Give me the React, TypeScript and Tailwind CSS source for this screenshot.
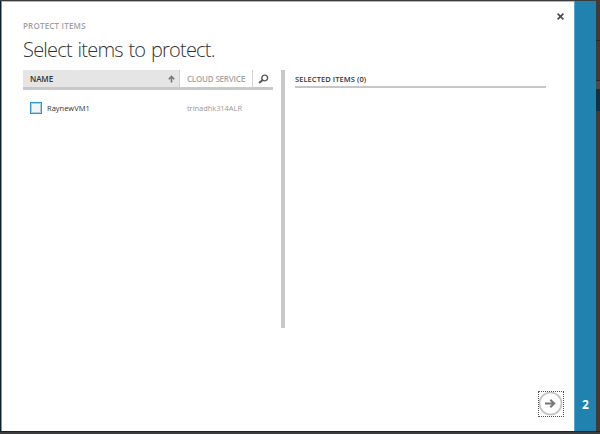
import React from "react";

type Item = { name: string; service: string };

const items: Item[] = [{ name: "RaynewVM1", service: "trinadhk314ALR" }];

function CloseIcon() {
  return (
    <svg className="h-[7px] w-[7px]" viewBox="0 0 7 7" fill="none" stroke="#4c4c4c" strokeWidth="1.7">
      <path d="M0.6 0.7 6.4 6.3M6.4 0.7 0.6 6.3" />
    </svg>
  );
}

function SortIcon() {
  return (
    <svg className="h-[8px] w-[7px]" viewBox="0 0 7 8" fill="none" stroke="#777" strokeWidth="1.6">
      <path d="M3.5 7.5V1.2M0.8 4.2 3.5 1.4 6.2 4.2" />
    </svg>
  );
}

function SearchIcon() {
  return (
    <svg className="h-[10px] w-[11px]" viewBox="0 0 11 10" fill="none" stroke="#555a60">
      <circle cx="6.7" cy="4" r="2.9" strokeWidth="1.4" />
      <path d="M4.4 6.2 1 9" strokeWidth="2" />
    </svg>
  );
}

function NextIcon() {
  return (
    <svg className="h-[24px] w-[24px]" viewBox="0 0 24 24" fill="none">
      <circle cx="11.5" cy="11.5" r="11" stroke="#c3c3c3" strokeWidth="1.7" />
      <path d="M6 11.5H15M11.3 7.7 15.2 11.5 11.3 15.3" stroke="#777" strokeWidth="2" />
    </svg>
  );
}

function ItemTable() {
  return (
    <section className="w-[250px]">
      <div className="flex h-[20px] border-b-[3px] border-[#c9c9c9] text-[8px] leading-[18px]">
        <div className="flex w-[157px] items-center justify-between border-r border-[#d0d0d0] bg-[#e5e5e5] pr-[4px] pl-[7px] font-semibold text-[#333]">
          <span className="tracking-[-0.1px]">NAME</span>
          <SortIcon />
        </div>
        <div className="w-[73px] border-r border-[#d0d0d0] pl-[7px] font-semibold tracking-[-0.2px] whitespace-nowrap text-[#a5a5a5]">
          CLOUD SERVICE
        </div>
        <div className="flex items-center pl-[5px]">
          <SearchIcon />
        </div>
      </div>
      {items.map((item) => (
        <div key={item.name} className="mt-[12px] flex h-[12px] items-center pl-[7px] text-[7.5px] leading-[12px]">
          <span className="h-[12px] w-[12px] border border-[#3498ca] bg-[#f4f4f4] shadow-[inset_0_0_0_1px_#a5d0e6]" />
          <span className="w-[139px] pl-[5px] text-[#333]">{item.name}</span>
          <span className="pl-[6px] tracking-[-0.05px] text-[#999]">{item.service}</span>
        </div>
      ))}
    </section>
  );
}

export default function App() {
  return (
    <div className="flex h-[434px] w-[600px] flex-col overflow-hidden bg-[#3c3b3d] pt-px font-['Open_Sans','Noto_Sans',sans-serif]">
      <div className="flex h-[430px]">
        <div className="w-[2px] border-r border-[#8b929a] bg-[#0a1f33]" />
        <main className="flex w-[572px] flex-col border-t border-[#b5b5b5] bg-white pr-[10px] pl-[21px]">
          <div className="flex h-[32px] justify-between">
            <h2 className="pt-[18px] text-[8px] leading-[12px] font-semibold tracking-[0.2px] text-[#a0a0a0]">PROTECT ITEMS</h2>
            <div className="pt-[11px]">
              <CloseIcon />
            </div>
          </div>
          <h1 className="h-[36px] text-[20px] leading-[31px] font-light tracking-[-0.78px] text-[#333] [word-spacing:1.2px]">
            Select items to protect.
          </h1>
          <div className="flex h-[258px]">
            <ItemTable />
            <div className="ml-[8px] w-[4px] bg-[#c8c8c8]" />
            <section className="ml-[10px] w-[251px]">
              <h3 className="h-[18px] border-b-2 border-[#c6c6c6] text-[7.5px] leading-[19px] font-semibold tracking-[0.07px] text-[#333]">
                SELECTED ITEMS (0)
              </h3>
            </section>
          </div>
          <div className="mt-[63px] flex justify-end">
            <button className="h-[26px] w-[26px] border border-dotted border-[#555]">
              <NextIcon />
            </button>
          </div>
        </main>
        <aside className="flex w-[22px] items-end justify-center border-l border-[#5ba5c6] bg-[#2083af] pb-[18px] text-[12px] leading-[16px] font-bold text-white">
          2
        </aside>
        <div className="flex w-[4px] flex-col">
          <div className="h-[40px] border-b border-[#29292b]" />
          <div className="h-[40px] border-b border-[#29292b]" />
          <div className="h-[8px] bg-[#4a4a4a]" />
          <div className="h-[22px] bg-[#12303f]" />
        </div>
      </div>
      <div className="h-px bg-[#222]" />
    </div>
  );
}
